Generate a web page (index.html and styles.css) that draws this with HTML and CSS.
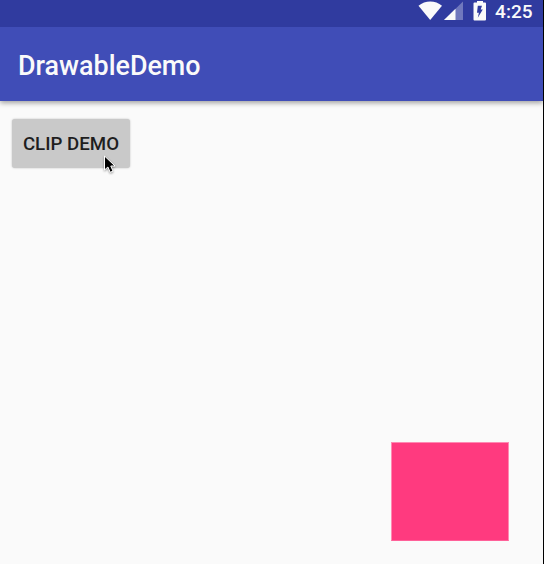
FILE: index.html
```html
<!DOCTYPE html>
<html lang="en">
<head>
<meta charset="utf-8">
<title>DrawableDemo</title>
<link rel="stylesheet" href="styles.css">
</head>
<body>
<div class="screen">
  <header class="header">
    <div class="status-bar">
      <svg class="status-icons" width="72" height="27" viewBox="0 0 72 27" aria-hidden="true">
        <path d="M.5 5.800C7 0 17.500 0 24 5.800L12.200 20Z" fill="#fafafa"/>
        <path d="M26 20L45 1.500V20Z" fill="#7078bd"/>
        <path d="M26 20L37.500 8.800V20Z" fill="#fafafa"/>
        <path d="M56.500 2.500H59V1H65V2.500H67Q68 2.500 68 3.500V19.500Q68 20.500 67 20.500H56.500Q55.500 20.500 55.500 19.500V3.500Q55.500 2.500 56.500 2.500Z" fill="#fafafa"/>
        <path d="M59.800 5.800H64L62.700 9.600H64.800L59.800 17.800L60.900 12.700H59Z" fill="#303b9f"/>
      </svg>
      <span class="clock">4:25</span>
    </div>
    <div class="app-bar"><h1 class="title">DrawableDemo</h1></div>
  </header>
  <main class="content">
    <button class="button">CLIP DEMO</button>
    <div class="drawable"></div>
  </main>
  <svg class="cursor" width="15" height="20" viewBox="0 0 15 20" aria-hidden="true">
    <path d="M.5 1V15L3.900 12L6.200 17.300L9 16.100L6.800 11H11Z" fill="#000" stroke="#fff" stroke-width="1"/>
  </svg>
</div>
</body>
</html>
```

FILE: styles.css
```css
* {
  box-sizing: border-box;
}

body {
  margin: 0;
  font-family: Roboto, sans-serif;
}

.screen {
  position: relative;
  display: flex;
  flex-direction: column;
  width: 544px;
  height: 564px;
  overflow: hidden;
  background: #fafafa;
  border-right: 1px solid #000;
}

.header {
  color: #fafafa;
  box-shadow: 0 2px 5px rgba(0, 0, 0, .36);
}

.status-bar {
  display: flex;
  justify-content: flex-end;
  height: 27px;
  padding-right: 10.500px;
  background: #303b9f;
}

.status-icons {
  margin-right: 5px;
}

.clock {
  font-size: 19px;
  font-weight: 500;
  line-height: 24px;
}

.app-bar {
  display: flex;
  align-items: center;
  height: 74px;
  padding: 4px 18px 0;
  background: #404db7;
}

.title {
  margin: 0;
  font-size: 26.900px;
  font-weight: 500;
  line-height: 32px;
}

.content {
  display: flex;
  flex: 1;
  flex-direction: column;
  justify-content: space-between;
  padding: 18px 34.500px 22.800px 12px;
}

.button {
  width: 118px;
  height: 49px;
  padding: 1px 0 0;
  border: 0;
  border-radius: 3px;
  background: #c9c9c9;
  box-shadow: 0 0 2px rgba(0, 0, 0, .25);
  color: #1e1e1e;
  font: 500 18.700px/24px Roboto, sans-serif;
}

.drawable {
  align-self: flex-end;
  width: 118px;
  height: 99px;
  background: #ff3a7f;
  border: 1px solid #ff8ab3;
  border-bottom-color: #ff6199;
}

.cursor {
  position: absolute;
  left: 104px;
  top: 155px;
  filter: drop-shadow(0 1px 1px rgba(0, 0, 0, .4));
}
```
